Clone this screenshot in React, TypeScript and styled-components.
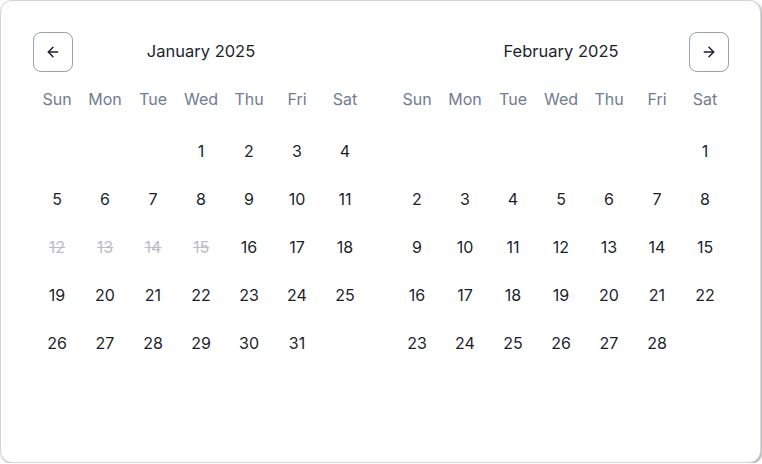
import styled, { createGlobalStyle, css } from "styled-components";

const GlobalStyle = createGlobalStyle`
    html, body {
        margin: 0;
        padding: 0;
        background: #ffffff;
    }
    body {
        font-family: "Inter", "Open Sans", sans-serif;
    }
`;

const Card = styled.div`
    box-sizing: border-box;
    width: 761px;
    height: 463px;
    padding: 31px 32px 32px;
    display: flex;
    gap: 24px;
    background: #fff;
    border: 1px solid #d3d4e0;
    border-radius: 12px;
    box-shadow: 1px 1px 2px rgba(0, 0, 0, 0.35);
`;

const Month = styled.div`
    width: 336px;
    display: flex;
    flex-direction: column;
`;

const Header = styled.div`
    position: relative;
    height: 40px;
    display: flex;
    align-items: center;
    justify-content: center;
`;

const Title = styled.div`
    margin-top: -2px;
    font-size: 16.5px;
    color: #1b1f2c;
`;

const NavButton = styled.button<{ side: "left" | "right" }>`
    position: absolute;
    top: 0;
    width: 40px;
    height: 40px;
    display: flex;
    align-items: center;
    justify-content: center;
    padding: 0;
    background: #fff;
    border: 1px solid #9ba1b3;
    border-radius: 8px;
    color: #1b1f2c;
    cursor: pointer;

    ${(props) =>
        props.side === "left"
            ? css`
                  left: 0;
              `
            : css`
                  right: 0;
              `}
`;

const Weekdays = styled.div`
    margin-top: 15px;
    height: 24px;
    display: grid;
    grid-template-columns: repeat(7, 48px);
    align-items: center;
`;

const Weekday = styled.div`
    text-align: center;
    font-size: 16px;
    color: #717b91;
`;

const Days = styled.div`
    margin-top: 16px;
    display: grid;
    grid-template-columns: repeat(7, 48px);
    grid-auto-rows: 48px;
`;

const Day = styled.div<{ disabled?: boolean }>`
    display: flex;
    align-items: center;
    justify-content: center;
    font-size: 16px;
    color: #1b1f2c;

    ${(props) =>
        props.disabled &&
        css`
            color: #b9bdc8;
            text-decoration: line-through;
        `}
`;

const WEEKDAYS = ["Sun", "Mon", "Tue", "Wed", "Thu", "Fri", "Sat"];

const Arrow = ({ dir }: { dir: "left" | "right" }) => (
    <svg width="16" height="16" viewBox="0 0 24 24" fill="none" stroke="currentColor" strokeWidth="2.2" strokeLinecap="round" strokeLinejoin="round">
        {dir === "left" ? (
            <>
                <path d="M19 12H5" />
                <path d="M12 19l-7-7 7-7" />
            </>
        ) : (
            <>
                <path d="M5 12h14" />
                <path d="M12 5l7 7-7 7" />
            </>
        )}
    </svg>
);

type MonthViewType = {
    title: string;
    offset: number;
    length: number;
    disabled?: number[];
    nav: "left" | "right";
};

const MonthView = (props: MonthViewType) => {
    const { title, offset, length, disabled = [], nav } = props;
    const blanks = Array.from({ length: offset });
    const days = Array.from({ length }, (_, i) => i + 1);

    return (
        <Month>
            <Header>
                <NavButton side={nav} aria-label={nav === "left" ? "Previous month" : "Next month"}>
                    <Arrow dir={nav} />
                </NavButton>
                <Title>{title}</Title>
            </Header>
            <Weekdays>
                {WEEKDAYS.map((w) => (
                    <Weekday key={w}>{w}</Weekday>
                ))}
            </Weekdays>
            <Days>
                {blanks.map((_, i) => (
                    <Day key={"b" + i} />
                ))}
                {days.map((d) => (
                    <Day key={d} disabled={disabled.includes(d)}>
                        {d}
                    </Day>
                ))}
            </Days>
        </Month>
    );
};

const App = () => {
    return (
        <>
            <GlobalStyle />
            <Card>
                <MonthView title="January 2025" offset={3} length={31} disabled={[12, 13, 14, 15]} nav="left" />
                <MonthView title="February 2025" offset={6} length={28} nav="right" />
            </Card>
        </>
    );
};

export default App;
